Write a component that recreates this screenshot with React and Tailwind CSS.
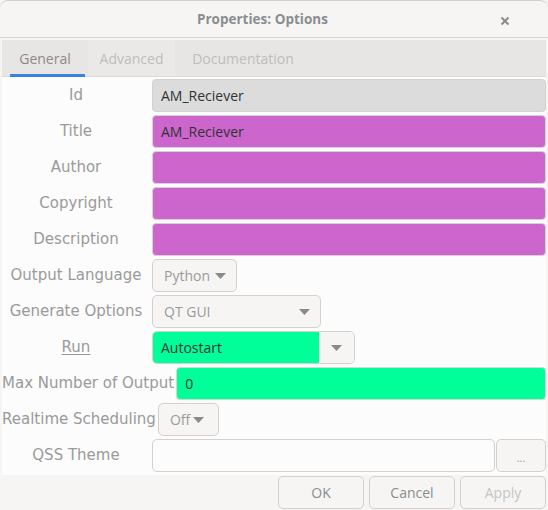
import React from 'react'

const font = { fontFamily: '"Open Sans", "Noto Sans", sans-serif' }

function Caret({ className = '' }) {
  return (
    <svg width="11" height="6" viewBox="0 0 11 6" className={className}>
      <path d="M0 0h11L5.5 6z" fill="#8a8a8a" />
    </svg>
  )
}

function Label({ children, underline }) {
  return (
    <div className="flex min-w-[148px] shrink-0 items-center justify-center whitespace-nowrap text-[15px] text-[#9a9a9a] font-['DejaVu_Sans',sans-serif]">
      <span className={underline ? 'underline underline-offset-2' : ''}>{children}</span>
    </div>
  )
}

function Row({ label, underline, children }) {
  return (
    <div className="flex h-[33px] gap-[2px]">
      <Label underline={underline}>{label}</Label>
      {children}
    </div>
  )
}

function Field({ bg, value }) {
  return (
    <div className={`flex flex-1 items-center rounded-[4px] border px-[8px] text-[14px] text-[#2e3436] ${bg}`}>
      {value}
    </div>
  )
}

function Combo({ value, width, caretGap }) {
  return (
    <div
      className={`flex items-center rounded-[5px] border border-[#d5d0cc] bg-[#f6f5f4] pl-[11px] pr-[10px] text-[14px] text-[#9a9a9a] ${width}`}
    >
      <span>{value}</span>
      <Caret className={caretGap} />
    </div>
  )
}

export default function App() {
  return (
    <div className="h-[510px] w-[548px] overflow-hidden bg-[#f6f5f4]" style={font}>
      <div className="relative flex h-[38px] items-center rounded-t-[8px] border-t border-[#cfcfcf] border-b border-b-[#d8d4d0] pl-[197px]">
        <span className="text-[13.5px] font-bold text-[#8a8d8f]">Properties: Options</span>
        <svg width="10" height="10" viewBox="0 0 10 10" className="absolute right-[38px] top-[15px]">
          <path d="M1.5 1.5l7 7M8.5 1.5l-7 7" stroke="#8a8a8a" strokeWidth="2" />
        </svg>
      </div>

      <div className="mx-[2px] mt-[2px] flex h-[37px] border-b border-[#dcd8d4] bg-[#e7e6e4] text-[14px]">
        <div className="relative flex w-[86px] items-center justify-center text-[#8a8a8a]">
          <span>General</span>
          <div className="absolute bottom-[-1px] left-[8px] h-[3px] w-[75px] bg-[#3584e4]" />
        </div>
        <div className="flex w-[87px] items-center justify-center bg-[#ebe9e7] text-[#bdbdbd]">
          <span>Advanced</span>
        </div>
        <div className="flex w-[136px] items-center justify-center text-[#bdbdbd]">
          <span>Documentation</span>
        </div>
      </div>

      <div className="mx-[2px] flex h-[398px] flex-col gap-[3px] bg-[#fcfcfc] pt-[2px]">
        <Row label="Id">
          <Field bg="bg-[#dcdcdc] border-[#d2d2d2]" value="AM_Reciever" />
        </Row>
        <Row label="Title">
          <Field bg="bg-[#cc66cc] border-[#d8d0d8]" value="AM_Reciever" />
        </Row>
        <Row label="Author">
          <Field bg="bg-[#cc66cc] border-[#d8d0d8]" />
        </Row>
        <Row label="Copyright">
          <Field bg="bg-[#cc66cc] border-[#d8d0d8]" />
        </Row>
        <Row label="Description">
          <Field bg="bg-[#cc66cc] border-[#d8d0d8]" />
        </Row>
        <Row label="Output Language">
          <Combo value="Python" width="w-[85px]" caretGap="ml-[5px]" />
        </Row>
        <Row label="Generate Options">
          <Combo value="QT GUI" width="w-[169px] justify-between" />
        </Row>
        <Row label="Run" underline>
          <div className="flex w-[203px] overflow-hidden rounded-[5px] border border-[#d5d0cc]">
            <div className="flex flex-1 items-center bg-[#00ff99] px-[8px] text-[14px] text-[#2e3436]">
              Autostart
            </div>
            <div className="flex w-[35px] items-center justify-center bg-[#f6f5f4]">
              <Caret />
            </div>
          </div>
        </Row>
        <Row label="Max Number of Output">
          <Field bg="bg-[#00ff99] border-[#d5d8d5]" value="0" />
        </Row>
        <Row label="Realtime Scheduling">
          <Combo value="Off" width="w-[61px] !pl-[11px] !pr-[6px]" caretGap="ml-[3px]" />
        </Row>
        <Row label="QSS Theme">
          <div className="flex flex-1 gap-[1px]">
            <div className="flex-1 rounded-[5px] border border-[#d5d0cc] bg-[#fcfcfc]" />
            <div className="flex w-[50px] items-end justify-center rounded-[5px] border border-[#d5d0cc] bg-[#f6f5f4] pb-[8px] text-[11px] leading-none text-[#9a9a9a]">
              ...
            </div>
          </div>
        </Row>
      </div>

      <div className="mr-[2px] mt-[1px] flex justify-end gap-[5px]">
        {['OK', 'Cancel', 'Apply'].map((b) => (
          <div
            key={b}
            className={`flex h-[33px] w-[86px] items-center justify-center rounded-[5px] border border-[#d5d0cc] bg-[#f6f5f4] text-[14px] ${
              b === 'Apply' ? 'text-[#c4c4c4]' : 'text-[#8c8c8c]'
            }`}
          >
            {b}
          </div>
        ))}
      </div>
    </div>
  )
}
